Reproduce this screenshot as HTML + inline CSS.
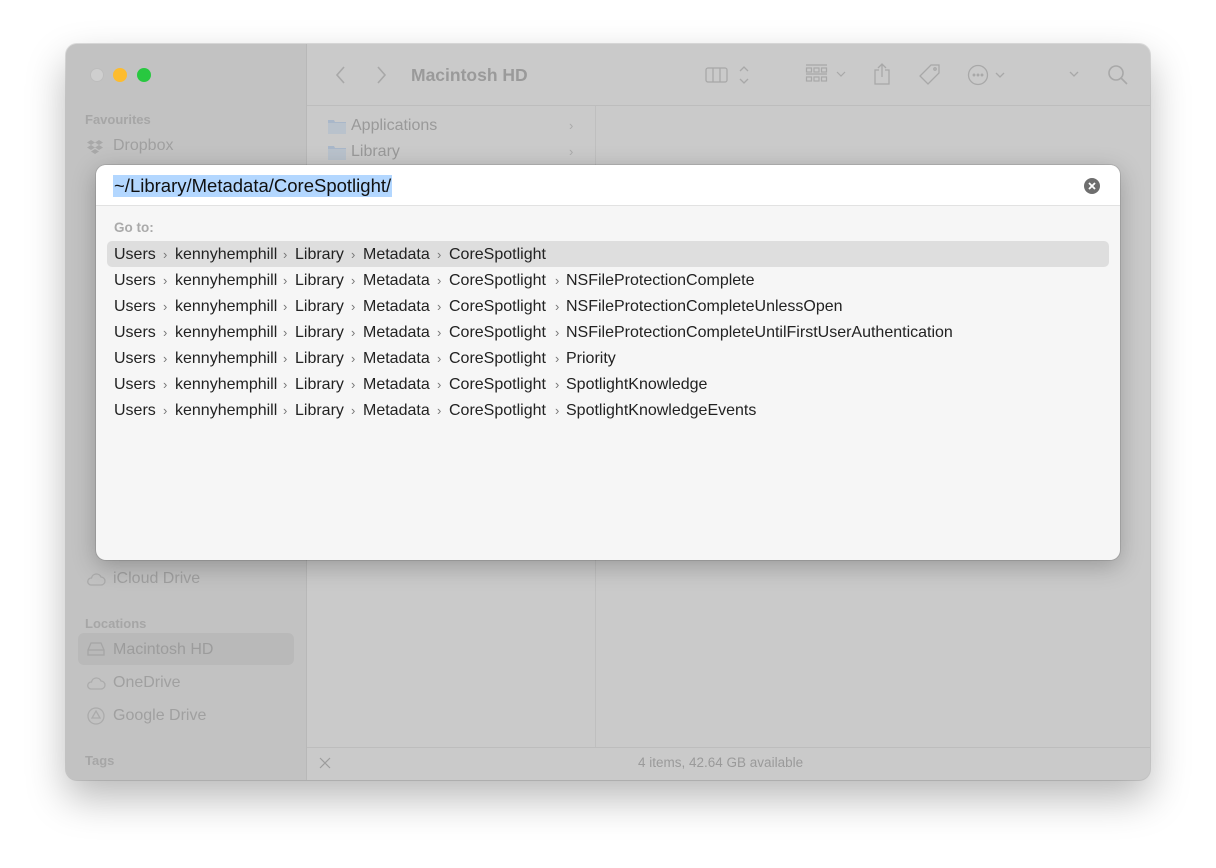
<!DOCTYPE html>
<html><head><meta charset="utf-8">
<style>
*{margin:0;padding:0;box-sizing:border-box}
html,body{width:1216px;height:868px;background:#fff;overflow:hidden;font-family:"Liberation Sans",sans-serif}
.win{position:absolute;left:66px;top:44px;width:1084px;height:736px;border-radius:11px;background:#cacaca;overflow:hidden;
 box-shadow:0 18px 40px rgba(0,0,0,.28),0 0 0 1px rgba(0,0,0,.12)}
.side{position:absolute;left:0;top:0;width:241px;height:736px;background:#c2c2c2;border-right:1px solid #b8b8b8}
.abs{position:absolute}
.dot{position:absolute;top:24px;width:14px;height:14px;border-radius:50%}
.sh{position:absolute;font-size:13px;font-weight:bold;color:#a6a6a6}
.si{position:absolute;font-size:16px;color:#a0a0a0}
.tb{position:absolute;left:241px;top:0;right:0;height:62px;border-bottom:1px solid #bdbdbd}
.dlg{position:absolute;left:96px;top:165px;width:1024px;height:395px;background:#f6f6f6;border-radius:10px;overflow:hidden;
 box-shadow:0 6px 24px rgba(0,0,0,.25),0 0 0 1px rgba(0,0,0,.1)}
.inp{height:41px;background:#fff;border-bottom:1px solid #e2e2e2;position:relative}
.row{position:absolute;left:0;height:26px;width:1024px;font-size:16px;color:#222;}
.row span{position:absolute;top:4px;white-space:nowrap}
.row i{position:absolute;top:5px;font-style:normal;color:#777;font-size:13px}
</style></head><body>
<div class="win">
 <div class="side">
  <div class="dot" style="left:24px;background:#cfcfcf;border:1px solid #bdbdbd"></div>
  <div class="dot" style="left:47px;background:#fdbc2e"></div>
  <div class="dot" style="left:71px;background:#28c840"></div>
  <div class="sh" style="left:19px;top:68px">Favourites</div>
  <svg class="abs" style="left:20px;top:96px" width="18" height="14" viewBox="0 0 18 14" fill="#a8a8a8"><path d="M5 0l4 2.5-4 2.5-4-2.5zM13 0l4 2.5-4 2.5-4-2.5zM5 5l4 2.5-4 2.5-4-2.5zM13 5l4 2.5-4 2.5-4-2.5zM9 9l4 2.5-4 2.5-4-2.5z"/></svg>
  <div class="si" style="left:47px;top:93px">Dropbox</div>
  <svg class="abs" style="left:20px;top:528px" width="20" height="14" viewBox="0 0 20 14" fill="none" stroke="#ababab" stroke-width="1.3"><path d="M5 13h10a4 4 0 0 0 0-8 5 5 0 0 0-9.5 1A3.5 3.5 0 0 0 5 13z"/></svg>
  <div class="si" style="left:47px;top:526px">iCloud Drive</div>
  <div class="sh" style="left:19px;top:572px">Locations</div>
  <div class="abs" style="left:12px;top:589px;width:216px;height:32px;background:#b9b9b9;border-radius:6px"></div>
  <svg class="abs" style="left:21px;top:597px" width="18" height="16" viewBox="0 0 18 16" fill="none" stroke="#a5a5a5" stroke-width="1.3"><path d="M4 2h10l3 7v5H1V9z M1 9h16"/></svg>
  <div class="si" style="left:47px;top:597px;color:#9c9c9c">Macintosh HD</div>
  <svg class="abs" style="left:20px;top:632px" width="20" height="14" viewBox="0 0 20 14" fill="none" stroke="#ababab" stroke-width="1.3"><path d="M5 13h10a4 4 0 0 0 0-8 5 5 0 0 0-9.5 1A3.5 3.5 0 0 0 5 13z"/></svg>
  <div class="si" style="left:47px;top:630px">OneDrive</div>
  <svg class="abs" style="left:21px;top:663px" width="18" height="18" viewBox="0 0 18 18" fill="none" stroke="#ababab" stroke-width="1.3"><circle cx="9" cy="9" r="8"/><path d="M9 4l4 7H5z"/></svg>
  <div class="si" style="left:47px;top:663px">Google Drive</div>
  <div class="sh" style="left:19px;top:709px">Tags</div>
 </div>
 <div class="tb">
  <svg class="abs" style="left:25px;top:21px" width="60" height="20" viewBox="0 0 60 20" fill="none" stroke="#a8a8a8" stroke-width="1.6"><path d="M12 2L5 10l7 8M46 2l7 8-7 8"/></svg>
  <div class="abs" style="left:104px;top:21px;font-size:17.5px;font-weight:bold;color:#9a9a9a">Macintosh HD</div>
  <svg class="abs" style="left:398px;top:20px" width="50" height="22" viewBox="0 0 50 22" fill="none" stroke="#a8a8a8" stroke-width="1.3"><rect x="1" y="4" width="21" height="14" rx="2"/><path d="M8 4v14M15 4v14M35 7l4-4 4 4M35 15l4 4 4-4"/></svg>
  <svg class="abs" style="left:498px;top:19px" width="45" height="22" viewBox="0 0 45 22" fill="none" stroke="#a8a8a8" stroke-width="1.2"><path d="M1 2h21M1 11h21"/><rect x="1.5" y="5" width="5" height="4"/><rect x="9" y="5" width="5" height="4"/><rect x="16.5" y="5" width="5" height="4"/><rect x="1.5" y="14" width="5" height="4"/><rect x="9" y="14" width="5" height="4"/><rect x="16.5" y="14" width="5" height="4"/><path d="M32 9l4 4 4-4"/></svg>
  <svg class="abs" style="left:565px;top:18px" width="20" height="24" viewBox="0 0 20 24" fill="none" stroke="#a8a8a8" stroke-width="1.3"><path d="M7 8H3v14h14V8h-4M10 15V2M6 6l4-4 4 4"/></svg>
  <svg class="abs" style="left:611px;top:19px" width="24" height="24" viewBox="0 0 24 24" fill="none" stroke="#a8a8a8" stroke-width="1.3"><path d="M13 2h8v8L10 21 2 13z"/><circle cx="17" cy="6" r="1.2"/></svg>
  <svg class="abs" style="left:660px;top:20px" width="42" height="22" viewBox="0 0 42 22" fill="none" stroke="#a8a8a8" stroke-width="1.3"><circle cx="11" cy="11" r="9.5"/><circle cx="7" cy="11" r=".8"/><circle cx="11" cy="11" r=".8"/><circle cx="15" cy="11" r=".8"/><path d="M29 9l4 4 4-4"/></svg>
  <svg class="abs" style="left:760px;top:25px" width="14" height="10" viewBox="0 0 14 10" fill="none" stroke="#a8a8a8" stroke-width="1.3"><path d="M3 3l4 4 4-4"/></svg>
  <svg class="abs" style="left:800px;top:20px" width="22" height="22" viewBox="0 0 22 22" fill="none" stroke="#a8a8a8" stroke-width="1.6"><circle cx="9" cy="9" r="7"/><path d="M14 14l6 6"/></svg>
 </div>
 <div class="abs" style="left:529px;top:62px;width:1px;height:641px;background:#bfbfbf"></div>
 <svg class="abs" style="left:261px;top:73px" width="20" height="18" viewBox="0 0 20 18"><path d="M1 3h6l1 2h11v12H1z" fill="#a9b7c9"/><rect x="1" y="6" width="18" height="11" fill="#b9c2cc"/></svg>
 <div class="abs" style="left:285px;top:73px;font-size:16px;color:#999">Applications</div>
 <div class="abs" style="left:503px;top:74px;font-size:13px;color:#aaa">›</div>
 <svg class="abs" style="left:261px;top:99px" width="20" height="18" viewBox="0 0 20 18"><path d="M1 3h6l1 2h11v12H1z" fill="#a9b7c9"/><rect x="1" y="6" width="18" height="11" fill="#b9c2cc"/></svg>
 <div class="abs" style="left:285px;top:99px;font-size:16px;color:#999">Library</div>
 <div class="abs" style="left:503px;top:100px;font-size:13px;color:#aaa">›</div>
 <div class="abs" style="left:241px;top:703px;right:0;height:1px;background:#bdbdbd"></div>
 <svg class="abs" style="left:252px;top:712px" width="14" height="14" viewBox="0 0 14 14" stroke="#9c9c9c" stroke-width="1.2"><path d="M2 2l10 10M12 2L2 12"/></svg>
 <div class="abs" style="left:572px;top:711px;font-size:13.5px;color:#9a9a9a">4 items, 42.64 GB available</div>
</div>

<div class="dlg">
 <div class="inp">
  <div class="abs" style="left:17px;top:10px;height:22px;padding:0 1px;background:#b3d7ff;font-size:18.5px;color:#111;line-height:22px">~/Library/Metadata/CoreSpotlight/</div>
  <svg class="abs" style="left:987px;top:12px" width="18" height="18" viewBox="0 0 18 18"><circle cx="9" cy="9" r="8" fill="#6e6e6e"/><path d="M6 6l6 6M12 6l-6 6" stroke="#fff" stroke-width="1.8"/></svg>
 </div>
 <div class="abs" style="left:18px;top:55px;font-size:13.5px;font-weight:bold;color:#aaa">Go to:</div>
 <div class="abs" style="left:11px;top:76px;width:1002px;height:26px;background:#dedede;border-radius:5px"></div>
 <div class="row" style="top:77px"><span style="left:18px">Users</span><i style="left:67px">›</i><span style="left:79px">kennyhemphill</span><i style="left:187px">›</i><span style="left:199px">Library</span><i style="left:255px">›</i><span style="left:267px">Metadata</span><i style="left:341px">›</i><span style="left:353px">CoreSpotlight</span></div>
 <div class="row" style="top:103px"><span style="left:18px">Users</span><i style="left:67px">›</i><span style="left:79px">kennyhemphill</span><i style="left:187px">›</i><span style="left:199px">Library</span><i style="left:255px">›</i><span style="left:267px">Metadata</span><i style="left:341px">›</i><span style="left:353px">CoreSpotlight</span><i style="left:459px">›</i><span style="left:470px">NSFileProtectionComplete</span></div>
 <div class="row" style="top:129px"><span style="left:18px">Users</span><i style="left:67px">›</i><span style="left:79px">kennyhemphill</span><i style="left:187px">›</i><span style="left:199px">Library</span><i style="left:255px">›</i><span style="left:267px">Metadata</span><i style="left:341px">›</i><span style="left:353px">CoreSpotlight</span><i style="left:459px">›</i><span style="left:470px">NSFileProtectionCompleteUnlessOpen</span></div>
 <div class="row" style="top:155px"><span style="left:18px">Users</span><i style="left:67px">›</i><span style="left:79px">kennyhemphill</span><i style="left:187px">›</i><span style="left:199px">Library</span><i style="left:255px">›</i><span style="left:267px">Metadata</span><i style="left:341px">›</i><span style="left:353px">CoreSpotlight</span><i style="left:459px">›</i><span style="left:470px">NSFileProtectionCompleteUntilFirstUserAuthentication</span></div>
 <div class="row" style="top:181px"><span style="left:18px">Users</span><i style="left:67px">›</i><span style="left:79px">kennyhemphill</span><i style="left:187px">›</i><span style="left:199px">Library</span><i style="left:255px">›</i><span style="left:267px">Metadata</span><i style="left:341px">›</i><span style="left:353px">CoreSpotlight</span><i style="left:459px">›</i><span style="left:470px">Priority</span></div>
 <div class="row" style="top:207px"><span style="left:18px">Users</span><i style="left:67px">›</i><span style="left:79px">kennyhemphill</span><i style="left:187px">›</i><span style="left:199px">Library</span><i style="left:255px">›</i><span style="left:267px">Metadata</span><i style="left:341px">›</i><span style="left:353px">CoreSpotlight</span><i style="left:459px">›</i><span style="left:470px">SpotlightKnowledge</span></div>
 <div class="row" style="top:233px"><span style="left:18px">Users</span><i style="left:67px">›</i><span style="left:79px">kennyhemphill</span><i style="left:187px">›</i><span style="left:199px">Library</span><i style="left:255px">›</i><span style="left:267px">Metadata</span><i style="left:341px">›</i><span style="left:353px">CoreSpotlight</span><i style="left:459px">›</i><span style="left:470px">SpotlightKnowledgeEvents</span></div>
</div>
</body></html>
